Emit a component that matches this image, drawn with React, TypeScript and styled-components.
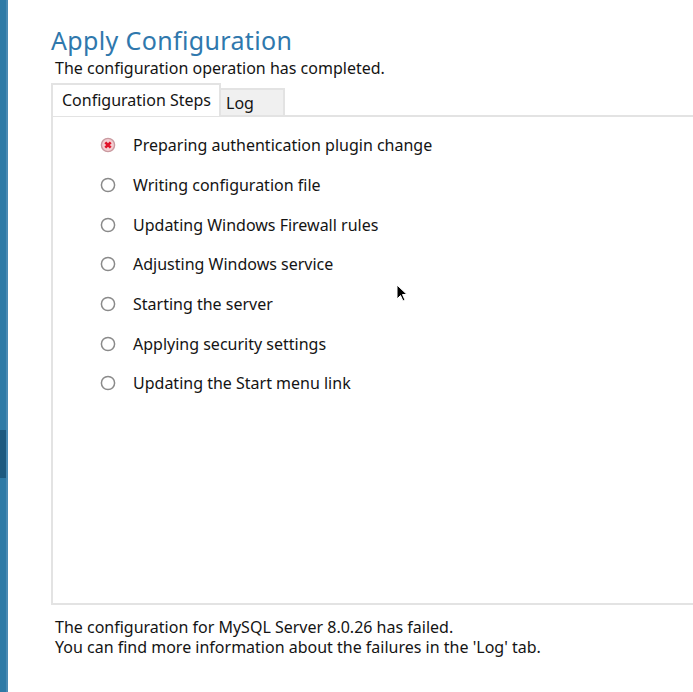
import React from "react";
import styled, { createGlobalStyle } from "styled-components";

const Global = createGlobalStyle`
  html, body { margin: 0; padding: 0; background: #ffffff; overflow: hidden; }
  body { font-family: "Noto Sans", "Open Sans", sans-serif; color: #141414; }
`;

const Page = styled.div`
  display: flex;
  width: 693px;
  height: 692px;
  position: relative;
  overflow: hidden;
`;

const Strip = styled.div`
  width: 6px;
  flex: none;
  display: flex;
  flex-direction: column;
  border-right: 2px solid #4a8ab3;
`;

const StripPart = styled.div<{ $dark?: boolean; $h?: number }>`
  background: ${(p) => (p.$dark ? "#1d5a80" : "#2e7aa6")};
  ${(p) => (p.$h ? `height: ${p.$h}px; flex: none;` : "flex: 1;")}
`;

const Main = styled.div`
  flex: 1;
  padding: 25px 0 0 43px;
  display: flex;
  flex-direction: column;
`;

const Title = styled.h1`
  margin: 0;
  font-weight: 400;
  font-size: 25px;
  line-height: 30px;
  color: #2f78ad;
  letter-spacing: 0.35px;
`;

const Subtitle = styled.div`
  margin: 2px 0 0 4px;
  font-size: 16px;
  line-height: 22px;
`;

const Tabs = styled.div`
  display: flex;
  align-items: flex-end;
  margin-top: 4px;
  height: 32px;
  position: relative;
  z-index: 1;
`;

const Tab = styled.div<{ $active?: boolean }>`
  font-size: 16px;
  box-sizing: border-box;
  display: flex;
  align-items: center;
  ${(p) =>
    p.$active
      ? `height: 33px; background: #fff; border: 2px solid #e3e3e3; border-bottom: none; width: 170px; padding: 0 0 2px 9px; margin-bottom: -1px;`
      : `height: 27px; background: #f0f0f0; border: 2px solid #e3e3e3; border-left: none; border-bottom: none; width: 64px; padding: 0 0 0 5px;`}
`;

const Panel = styled.div`
  box-sizing: border-box;
  height: 490px;
  margin-right: -4px;
  border: 2px solid #e3e3e3;
  border-right: none;
  padding: 17px 0 0 47px;
  display: flex;
  flex-direction: column;
  gap: 17px;
`;

const Step = styled.div`
  display: flex;
  align-items: center;
  gap: 17px;
  height: 22.7px;
  font-size: 16px;
`;

const Footer = styled.div`
  margin-top: 12px;
  margin-left: 4px;
  font-size: 16px;
  line-height: 20px;
`;

const Cursor = styled.svg`
  position: absolute;
  left: 396px;
  top: 284px;
`;

const Radio = ({ failed }: { failed?: boolean }) =>
  failed ? (
    <svg width="16" height="16" viewBox="0 0 16 16">
      <circle cx="8" cy="8" r="6.6" fill="#f4cdd1" stroke="#c99aa0" strokeWidth="1.4" />
      <path d="M5.3 5.3 L10.7 10.7 M10.7 5.3 L5.3 10.7" stroke="#e0142a" strokeWidth="2.6" />
    </svg>
  ) : (
    <svg width="16" height="16" viewBox="0 0 16 16">
      <circle cx="8" cy="8" r="6.6" fill="#fff" stroke="#8a8a8a" strokeWidth="1.5" />
    </svg>
  );

const steps = [
  "Preparing authentication plugin change",
  "Writing configuration file",
  "Updating Windows Firewall rules",
  "Adjusting Windows service",
  "Starting the server",
  "Applying security settings",
  "Updating the Start menu link",
];

export default function App() {
  return (
    <Page>
      <Global />
      <Strip>
        <StripPart $h={430} />
        <StripPart $dark $h={48} />
        <StripPart />
      </Strip>
      <Main>
        <Title>Apply Configuration</Title>
        <Subtitle>The configuration operation has completed.</Subtitle>
        <Tabs>
          <Tab $active>Configuration Steps</Tab>
          <Tab>Log</Tab>
        </Tabs>
        <Panel>
          {steps.map((s, i) => (
            <Step key={s}>
              <Radio failed={i === 0} />
              {s}
            </Step>
          ))}
        </Panel>
        <Footer>
          The configuration for MySQL Server 8.0.26 has failed.
          <br />
          You can find more information about the failures in the 'Log' tab.
        </Footer>
      </Main>
      <Cursor width="12" height="20" viewBox="0 0 12 20">
        <path d="M1 1 L1 15 L4.5 11.5 L7 17 L9 16 L6.5 10.5 L11 10.5 Z" fill="#000" stroke="#fff" strokeWidth="1" />
      </Cursor>
    </Page>
  );
}
